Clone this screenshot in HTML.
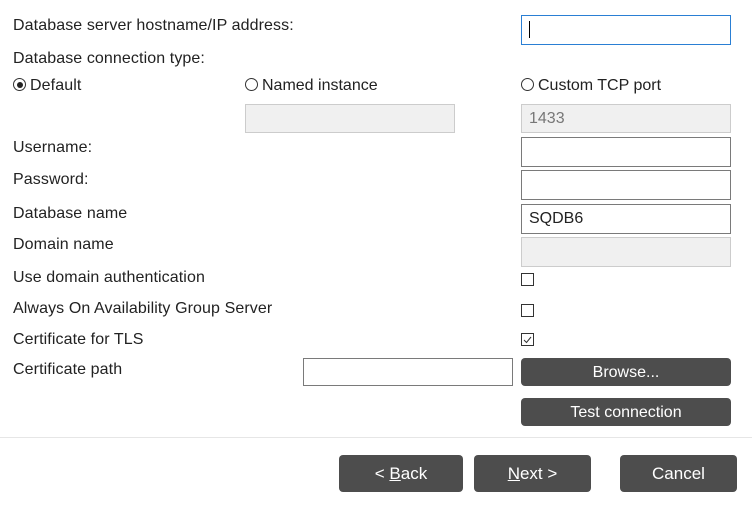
<!DOCTYPE html>
<html><head><style>
body{margin:0;width:752px;height:507px;background:#fff;font-family:"Liberation Sans",sans-serif;font-size:16px;color:#222;position:relative;overflow:hidden}
.a{position:absolute}
.l{position:absolute;left:13px;line-height:18px;letter-spacing:0.1px}
.in{position:absolute;box-sizing:border-box;border:1px solid #7a7a7a;background:#fff;height:30px;width:210px;left:521px;padding-left:7px;line-height:27px}
.g{background:#f0f0f0;border-color:#ccc;color:#777}
.cb{position:absolute;left:521px;width:13px;height:13px;box-sizing:border-box;border:1px solid #333}
.btn{position:absolute;background:#4d4d4d;color:#fff;border-radius:4px;text-align:center;box-sizing:border-box}
.r{display:inline-block;width:13px;height:13px;border:1px solid #333;border-radius:50%;box-sizing:border-box;vertical-align:-1px;margin-right:4px;position:relative}
</style></head><body>
<div class="l" style="top:17px">Database server hostname/IP address:</div>
<div class="in" style="top:15px;border-color:#2a7fd4"><span style="display:inline-block;width:1px;height:17px;background:#000;vertical-align:middle"></span></div>
<div class="l" style="top:50px">Database connection type:</div>
<div class="l" style="top:77px"><span class="r"><span style="position:absolute;left:2.5px;top:2.5px;width:6px;height:6px;border-radius:50%;background:#222"></span></span>Default</div>
<div class="a" style="left:245px;top:77px;line-height:18px"><span class="r"></span>Named instance</div>
<div class="a" style="left:521px;top:77px;line-height:18px"><span class="r"></span>Custom TCP port</div>
<div class="in g" style="left:245px;top:104px;height:29px"></div>
<div class="in g" style="top:104px;height:29px">1433</div>
<div class="l" style="top:139px">Username:</div>
<div class="in" style="top:137px"></div>
<div class="l" style="top:171px">Password:</div>
<div class="in" style="top:170px"></div>
<div class="l" style="top:205px">Database name</div>
<div class="in" style="top:204px">SQDB6</div>
<div class="l" style="top:236px">Domain name</div>
<div class="in g" style="top:237px"></div>
<div class="l" style="top:269px">Use domain authentication</div>
<div class="cb" style="top:273px"></div>
<div class="l" style="top:300px">Always On Availability Group Server</div>
<div class="cb" style="top:304px"></div>
<div class="l" style="top:331px">Certificate for TLS</div>
<div class="cb" style="top:333px"><svg width="11" height="11" style="position:absolute;left:0;top:0"><path d="M2 6 L4.5 8.5 L9 3" stroke="#333" stroke-width="1" fill="none"/></svg></div>
<div class="l" style="top:361px">Certificate path</div>
<div class="in" style="left:303px;top:358px;height:28px"></div>
<div class="btn" style="left:521px;top:358px;width:210px;height:28px;line-height:29px">Browse...</div>
<div class="btn" style="left:521px;top:398px;width:210px;height:28px;line-height:29px">Test connection</div>
<div class="a" style="left:0;top:437px;width:752px;height:1px;background:#e6e6e6"></div>
<div class="btn" style="left:339px;top:455px;width:124px;height:37px;line-height:38px;font-size:17px">&lt; <u>B</u>ack</div>
<div class="btn" style="left:474px;top:455px;width:117px;height:37px;line-height:38px;font-size:17px"><u>N</u>ext &gt;</div>
<div class="btn" style="left:620px;top:455px;width:117px;height:37px;line-height:38px;font-size:17px">Cancel</div>
</body></html>
